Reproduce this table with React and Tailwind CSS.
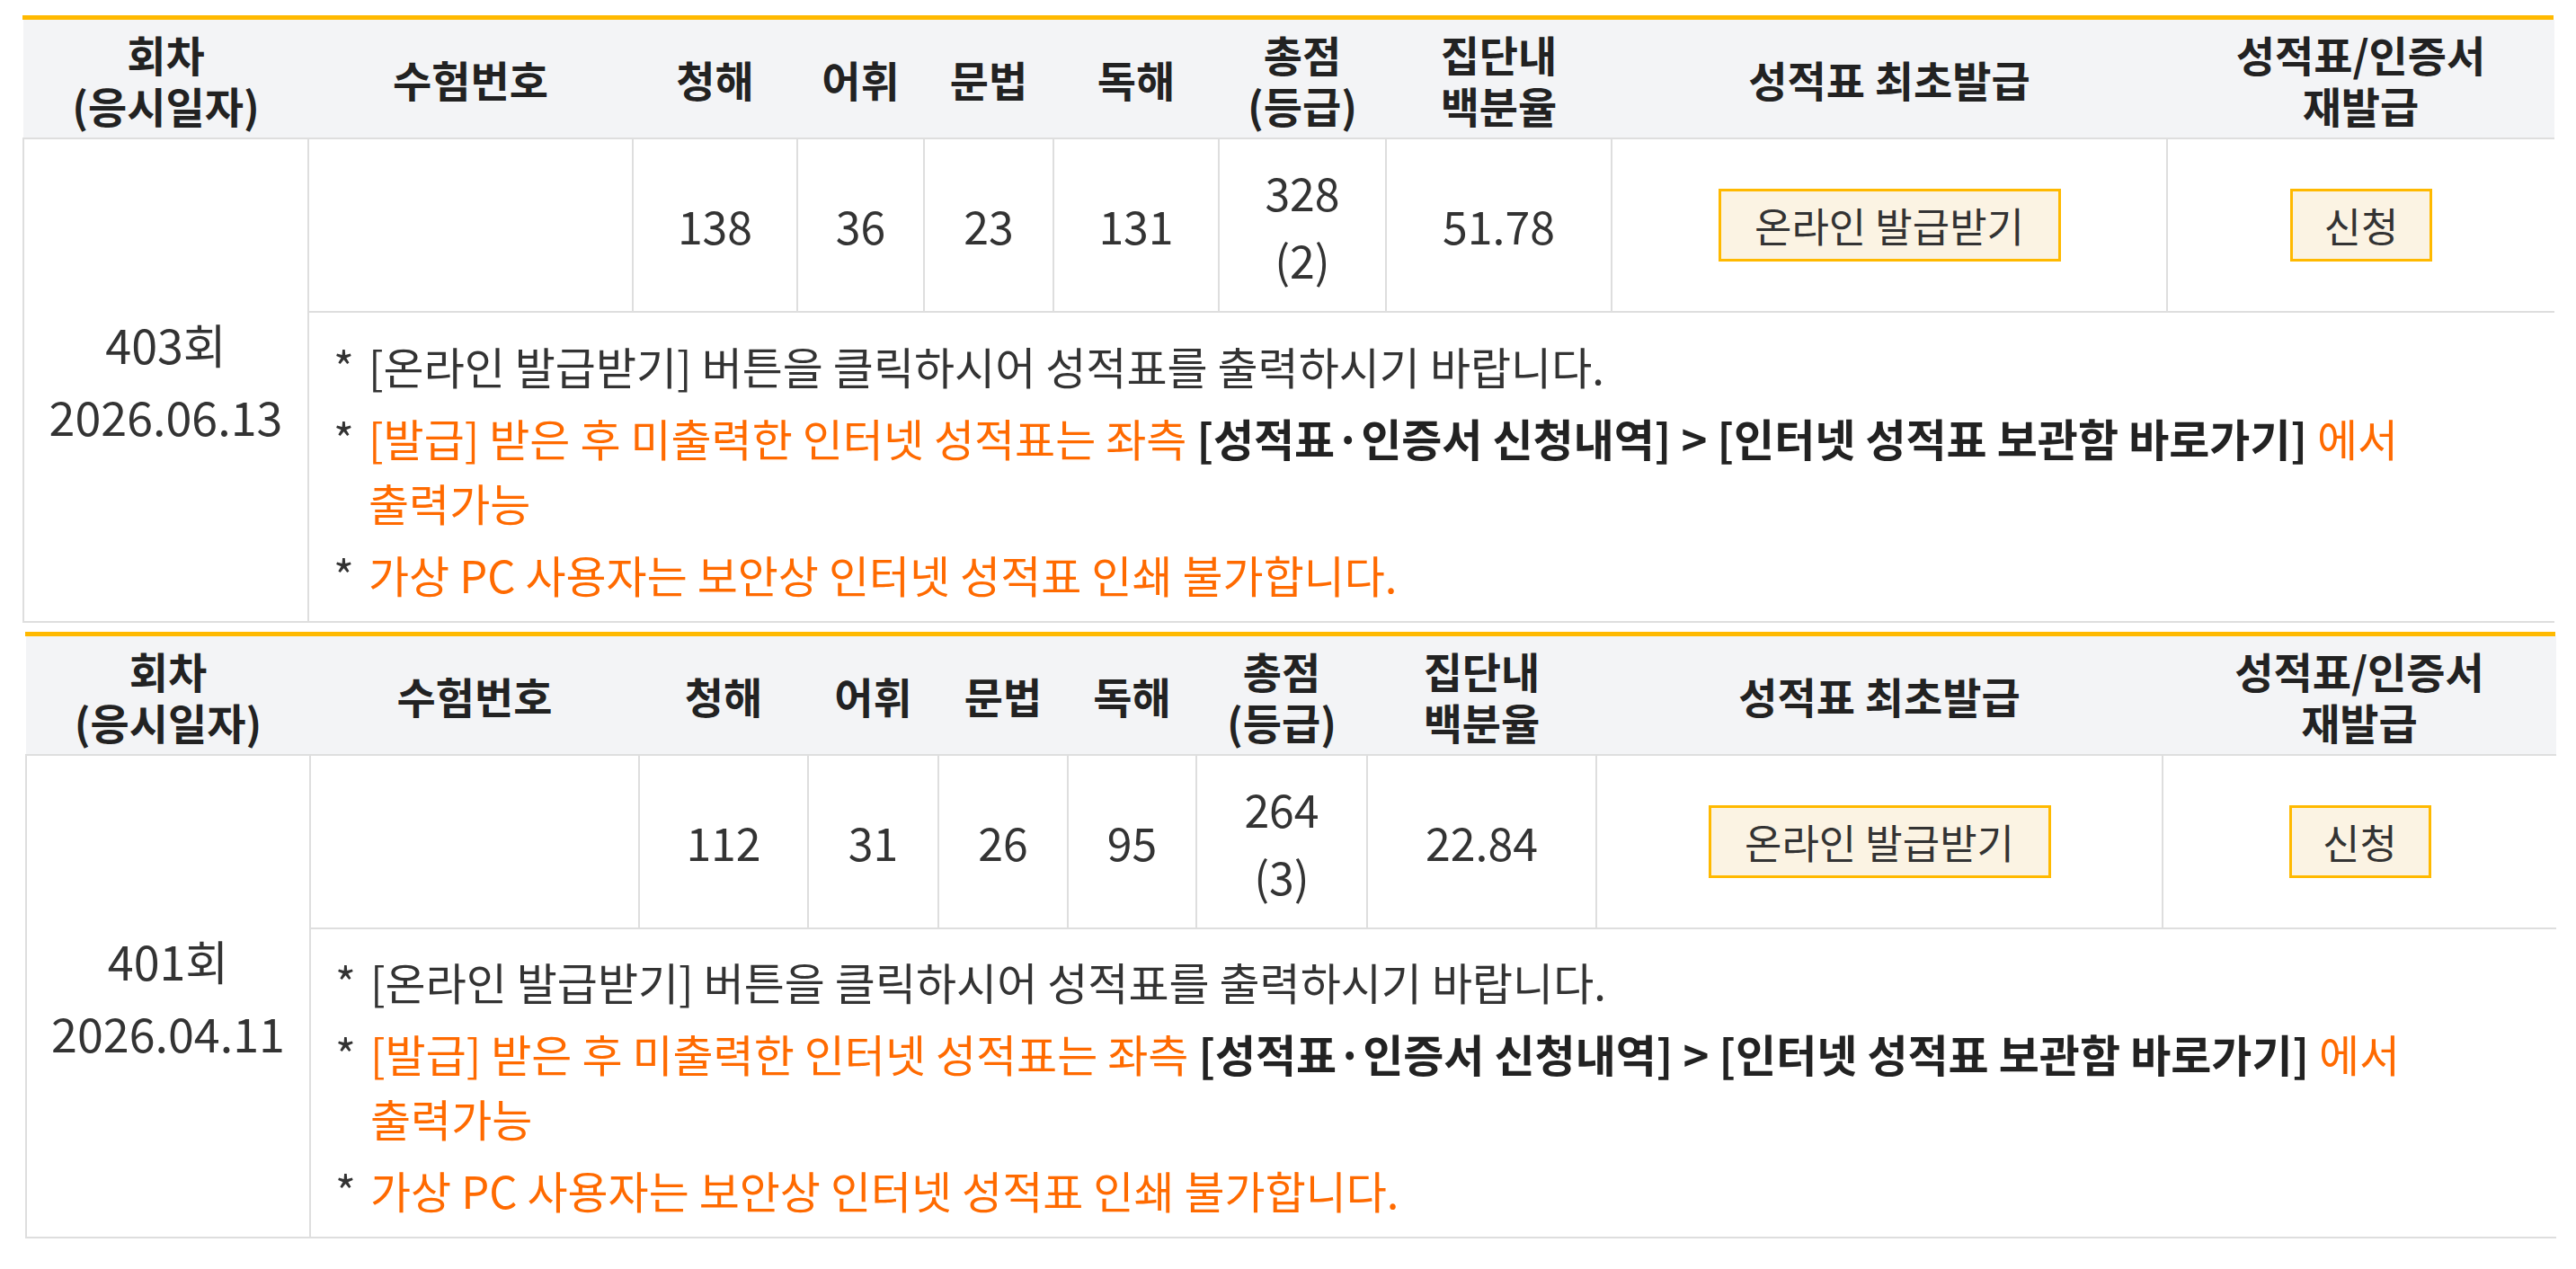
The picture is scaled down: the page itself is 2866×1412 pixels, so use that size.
import React from "react";

const tables = [
  {
    round: "403회",
    date: "2026.06.13",
    scores: ["138", "36", "23", "131"],
    total: "328",
    grade: "(2)",
    pct: "51.78",
    wrap: "w-[2816px] ml-[25px]",
    cols: ["w-[317px]", "w-[361px]", "w-[183px]", "w-[141px]", "w-[144px]", "w-[184px]", "w-[186px]", "w-[251px]", "w-[618px]", "w-[431px]"],
    notesH: "h-[345px]",
  },
  {
    round: "401회",
    date: "2026.04.11",
    scores: ["112", "31", "26", "95"],
    total: "264",
    grade: "(3)",
    pct: "22.84",
    wrap: "w-[2815px] ml-[28px] mt-[10px]",
    cols: ["w-[316px]", "w-[366px]", "w-[188px]", "w-[145px]", "w-[144px]", "w-[143px]", "w-[190px]", "w-[255px]", "w-[630px]", "w-[438px]"],
    notesH: "h-[344px]",
  },
];

const headers = [
  ["회차", "(응시일자)"],
  ["수험번호"],
  ["청해"],
  ["어휘"],
  ["문법"],
  ["독해"],
  ["총점", "(등급)"],
  ["집단내", "백분율"],
  ["성적표 최초발급"],
  ["성적표/인증서", "재발급"],
];

function Button({ children, className }) {
  return (
    <button
      className={
        "inline-flex items-center justify-center h-[81px] border-[3px] border-[#ffb900] bg-[#fbf3e3] text-[45px] leading-none text-[#333] " +
        className
      }
    >
      {children}
    </button>
  );
}

function ScoreTable({ t }) {
  const cell = "border-2 border-[#dedede] text-center align-middle text-[50px] leading-[75px] text-[#333]";
  return (
    <div className={"border-t-[5px] border-[#ffb900] " + t.wrap}>
      <table className="w-full table-fixed border-collapse">
        <colgroup>
          {t.cols.map((c, i) => (
            <col key={i} className={c} />
          ))}
        </colgroup>
        <thead>
          <tr className="h-[132px] bg-[#f3f4f6]">
            {headers.map((h, i) => (
              <th
                key={i}
                className="border-b-2 border-[#dedede] text-center align-middle text-[47px] leading-[57px] font-bold text-[#222]"
              >
                {h.map((line, j) => (
                  <div key={j}>{line}</div>
                ))}
              </th>
            ))}
          </tr>
        </thead>
        <tbody>
          <tr className="h-[193px]">
            <td rowSpan={2} className="border-l-2 border-r-2 border-b-2 border-[#dedede] text-center align-middle text-[52px] leading-[80px] text-[#333]">
              <div>{t.round}</div>
              <div>{t.date}</div>
            </td>
            <td className={cell}></td>
            {t.scores.map((s, i) => (
              <td key={i} className={cell}>
                {s}
              </td>
            ))}
            <td className={cell}>
              <div>{t.total}</div>
              <div>{t.grade}</div>
            </td>
            <td className={cell}>{t.pct}</td>
            <td className={cell}>
              <Button className="w-[381px]">온라인 발급받기</Button>
            </td>
            <td className="border-t-2 border-b-2 border-l-2 border-[#dedede] text-center align-middle">
              <Button className="w-[158px]">신청</Button>
            </td>
          </tr>
          <tr className={t.notesH}>
            <td colSpan={9} className="border-b-2 border-[#dedede] align-middle pl-[27px] pt-[6px]">
              <div className="flex flex-col gap-[8px] text-[49px] leading-[72px] text-[#333] whitespace-nowrap">
                <div className="flex">
                  <span className="w-[39px] shrink-0">*</span>
                  <span>[온라인 발급받기] 버튼을 클릭하시어 성적표를 출력하시기 바랍니다.</span>
                </div>
                <div className="flex">
                  <span className="w-[39px] shrink-0">*</span>
                  <span className="text-[#ff6a00]">
                    [발급] 받은 후 미출력한 인터넷 성적표는 좌측{" "}
                    <b className="font-bold text-[#222]">[성적표·인증서 신청내역] &gt; [인터넷 성적표 보관함 바로가기]</b> 에서
                    <br />
                    출력가능
                  </span>
                </div>
                <div className="flex">
                  <span className="w-[39px] shrink-0">*</span>
                  <span className="text-[#ff6a00]">가상 PC 사용자는 보안상 인터넷 성적표 인쇄 불가합니다.</span>
                </div>
              </div>
            </td>
          </tr>
        </tbody>
      </table>
    </div>
  );
}

export default function App() {
  return (
    <div className="min-h-screen bg-white pt-[17px] font-['Noto_Sans_CJK_KR','Noto_Sans',sans-serif]">
      {tables.map((t, i) => (
        <ScoreTable key={i} t={t} />
      ))}
    </div>
  );
}
